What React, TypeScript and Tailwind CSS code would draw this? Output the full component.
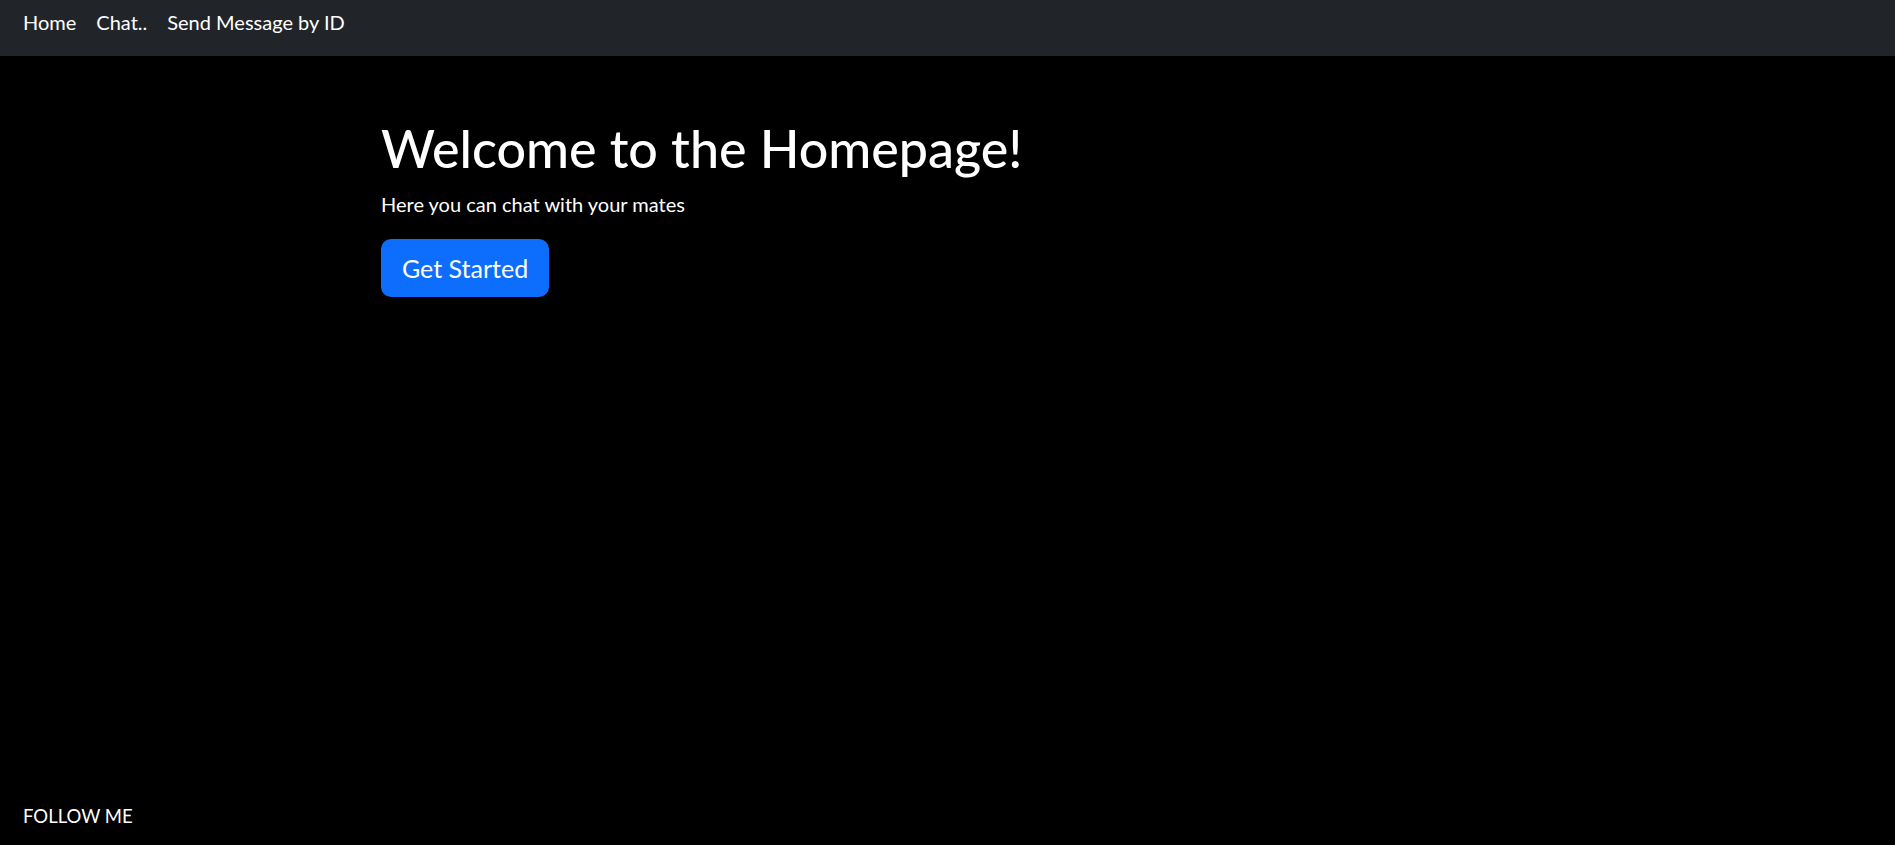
import React from 'react';

export default function App() {
  return (
    <div className="min-h-screen h-[845px] flex flex-col bg-black text-white font-['Lato','Noto_Sans',sans-serif]">
      <nav className="h-[56px] bg-[#212529] flex items-start pt-[10px] pl-[23px] gap-[20px] text-[20px] leading-[1.2]">
        <a className="text-white">Home</a>
        <a className="text-white">Chat..</a>
        <a className="text-white">Send Message by ID</a>
      </nav>

      <main className="flex-1 pl-[381px] pt-[61px]">
        <h1 className="text-[52px] leading-[1.2] font-medium">Welcome to the Homepage!</h1>
        <p className="mt-[13px] text-[20px] leading-[1.2]">Here you can chat with your mates</p>
        <button className="mt-[23px] h-[58px] px-[21px] rounded-[10px] bg-[#0d6efd] text-white text-[25px] leading-none">
          Get Started
        </button>
      </main>

      <footer className="pl-[23px] pb-[18px] text-[18.5px] leading-[1.2]">FOLLOW ME</footer>
    </div>
  );
}
